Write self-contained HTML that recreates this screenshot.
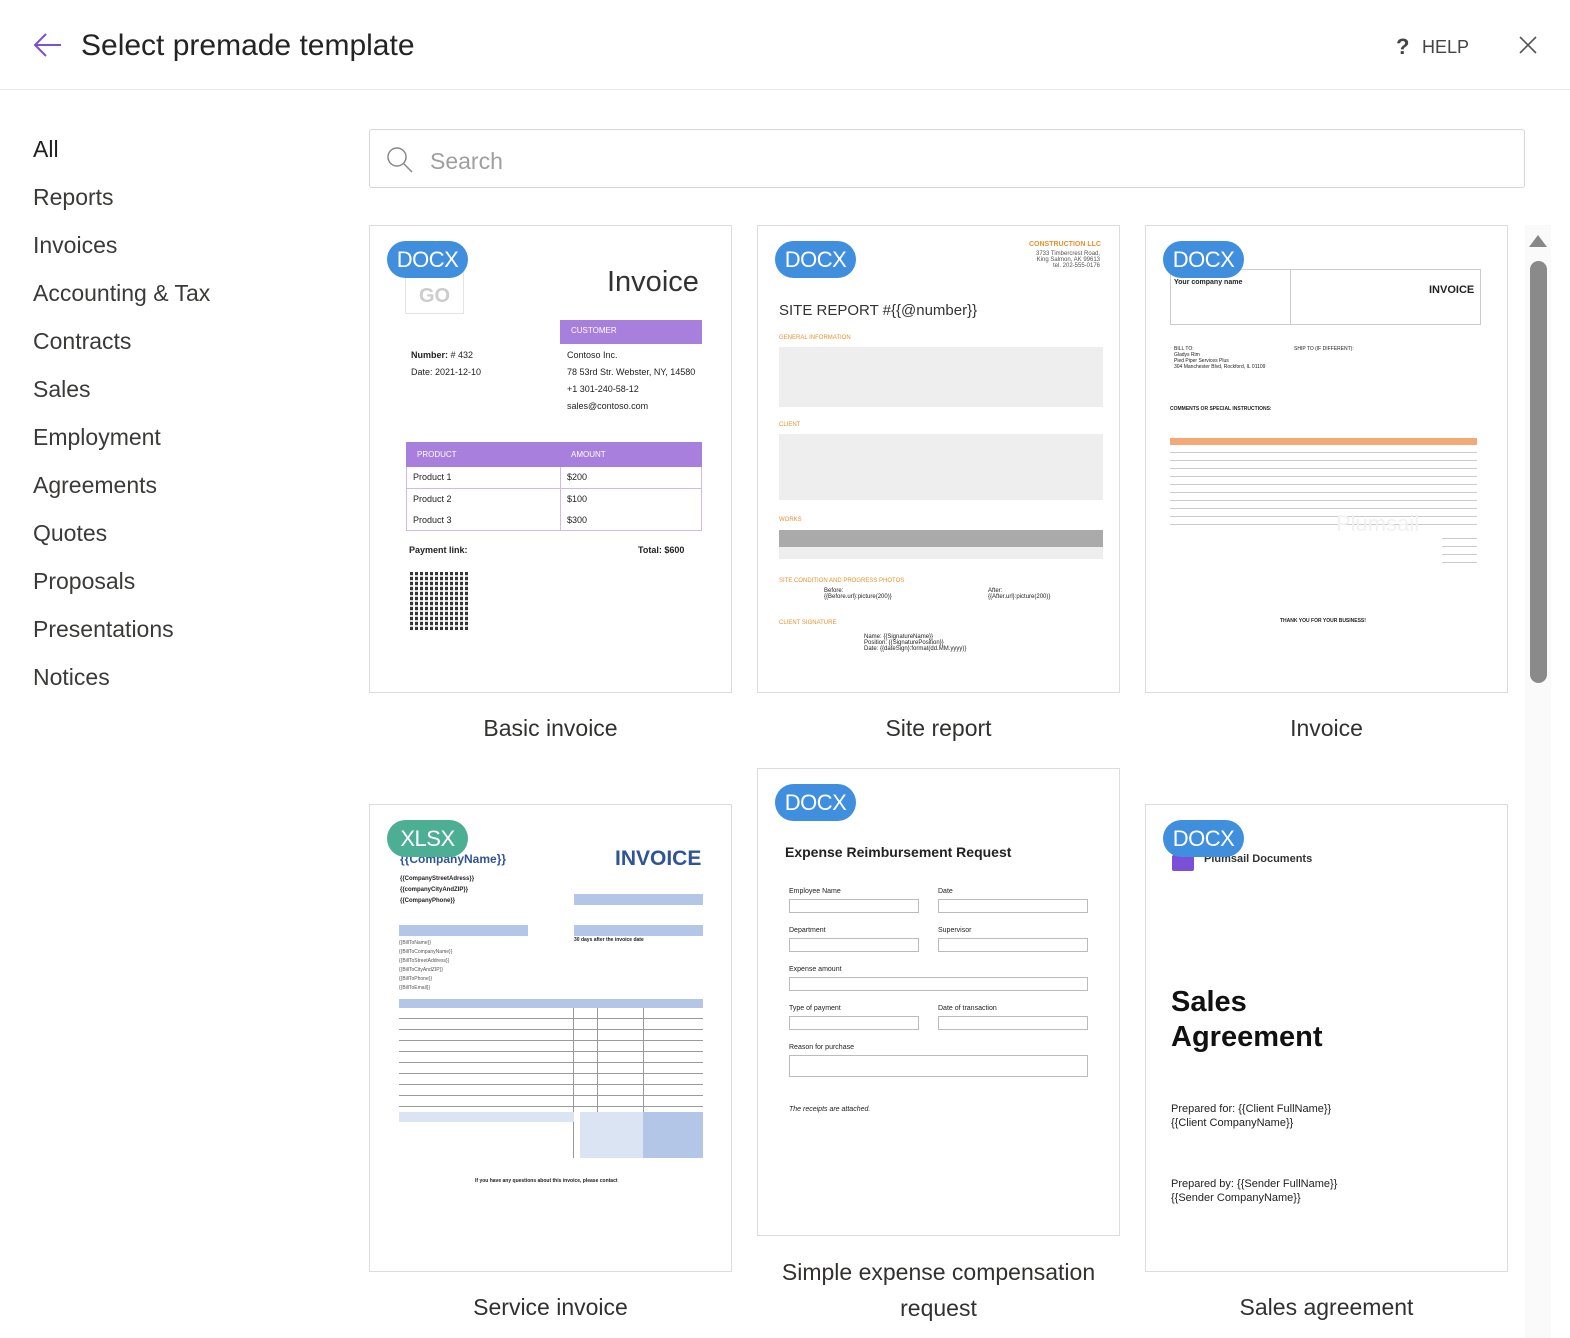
<!DOCTYPE html>
<html><head><meta charset="utf-8"><style>
*{box-sizing:border-box;margin:0;padding:0}
body{width:1570px;height:1338px;overflow:hidden;background:#fff;font-family:"Liberation Sans",sans-serif;color:#323130;position:relative}
.abs{position:absolute}
.hdr{position:absolute;left:0;top:0;width:1570px;height:90px;border-bottom:1px solid #e6e6e6}
.title{position:absolute;left:81px;top:29px;font-size:30px;color:#252423}
.nav div{position:absolute;left:33px;font-size:23px;color:#3b3a39}
.search{position:absolute;left:369px;top:129px;width:1156px;height:59px;border:1px solid #d6d6d6;border-radius:3px}
.card{position:absolute;width:363px;height:468px;border:1px solid #dcdcdc;background:#fff;overflow:hidden}
.badge{position:absolute;left:17px;top:15px;width:81px;height:37px;border-radius:19px;background:#3f8fde;color:#fff;font-size:22px;text-align:center;line-height:38px;z-index:2;letter-spacing:-0.5px}
.lbl{position:absolute;font-size:23px;color:#323130;text-align:center;width:363px}
.t{position:absolute;font-size:9px;color:#222;white-space:nowrap}
.bar{position:absolute;background:#a87fdc}
.g{position:absolute;background:#ddd}
.bl{position:absolute;background:#b4c6e7}
</style></head><body>
<div class="hdr"></div>
<svg class="abs" style="left:32px;top:32px" width="30" height="26" viewBox="0 0 30 26"><path d="M14 2 L3 13 L14 24 M3 13 H29" stroke="#7b4fd6" stroke-width="2" fill="none"/></svg>
<div class="title">Select premade template</div>
<div class="abs" style="left:1396px;top:34px;font-size:22px;font-weight:bold;color:#444">?</div>
<div class="abs" style="left:1422px;top:37px;font-size:18px;color:#444">HELP</div>
<svg class="abs" style="left:1519px;top:36px" width="18" height="18"><path d="M1 1L17 17M17 1L1 17" stroke="#555" stroke-width="1.6"/></svg>
<div class="nav">
<div style="top:136px;color:#201f1e">All</div>
<div style="top:184px">Reports</div>
<div style="top:232px">Invoices</div>
<div style="top:280px">Accounting &amp; Tax</div>
<div style="top:328px">Contracts</div>
<div style="top:376px">Sales</div>
<div style="top:424px">Employment</div>
<div style="top:472px">Agreements</div>
<div style="top:520px">Quotes</div>
<div style="top:568px">Proposals</div>
<div style="top:616px">Presentations</div>
<div style="top:664px">Notices</div>
</div>
<div class="search"><svg class="abs" style="left:16px;top:16px" width="28" height="28"><circle cx="11" cy="11" r="9" stroke="#888" stroke-width="1.5" fill="none"/><path d="M18 18L26 26" stroke="#888" stroke-width="1.5"/></svg><div class="abs" style="left:60px;top:18px;font-size:23px;color:#a19f9d">Search</div></div>

<div class="abs" style="left:1525px;top:225px;width:26px;height:1113px;background:#fafafa"></div>
<svg class="abs" style="left:1529px;top:234px" width="18" height="13"><path d="M0 13L9 1L18 13Z" fill="#888"/></svg>
<div class="abs" style="left:1530px;top:261px;width:17px;height:422px;border-radius:9px;background:#8a8a8a"></div>

<div class="card" style="left:369px;top:225px">
<div class="badge">DOCX</div>
<div class="abs" style="left:35px;top:40px;width:59px;height:48px;border:1px solid #e4e4e4;color:#ccc;font-weight:bold;font-size:20px;text-align:center;padding-top:18px">GO</div>
<div class="t" style="left:237px;top:40px;font-size:29px;color:#333">Invoice</div>
<div class="bar" style="left:190px;top:94px;width:142px;height:24px"></div><div class="t" style="left:201px;top:100px;color:#fff;font-size:8px">CUSTOMER</div>
<div class="t" style="left:41px;top:124px"><b>Number:</b> # 432</div><div class="t" style="left:41px;top:141px">Date: 2021-12-10</div>
<div class="t" style="left:197px;top:124px">Contoso Inc.</div><div class="t" style="left:197px;top:141px">78 53rd Str. Webster, NY, 14580</div><div class="t" style="left:197px;top:158px">+1 301-240-58-12</div><div class="t" style="left:197px;top:175px">sales@contoso.com</div>
<div class="bar" style="left:36px;top:216px;width:296px;height:25px"></div>
<div class="t" style="left:47px;top:224px;color:#fff;font-size:8px">PRODUCT</div><div class="t" style="left:201px;top:224px;color:#fff;font-size:8px">AMOUNT</div>
<div class="abs" style="left:36px;top:241px;width:296px;height:64px;border:1px solid #cdb8ef;border-top:none"></div>
<div class="abs" style="left:190px;top:241px;width:1px;height:64px;background:#cdb8ef"></div>
<div class="abs" style="left:36px;top:262px;width:296px;height:1px;background:#cdb8ef"></div>
<div class="t" style="left:43px;top:246px">Product 1</div><div class="t" style="left:197px;top:246px">$200</div>
<div class="t" style="left:43px;top:268px">Product 2</div><div class="t" style="left:197px;top:268px">$100</div>
<div class="t" style="left:43px;top:289px">Product 3</div><div class="t" style="left:197px;top:289px">$300</div>
<div class="t" style="left:39px;top:319px;font-weight:bold">Payment link:</div><div class="t" style="left:268px;top:319px;font-weight:bold">Total: $600</div>
<div class="abs" style="left:40px;top:346px;width:58px;height:58px;background:repeating-linear-gradient(90deg,#111 0 3px,#fff 3px 5px),#111;opacity:.85"></div>
<div class="abs" style="left:40px;top:346px;width:58px;height:58px;background:repeating-linear-gradient(0deg,transparent 0 3px,rgba(255,255,255,.8) 3px 5px)"></div>
</div>
<div class="lbl" style="left:369px;top:715px">Basic invoice</div>

<div class="card" style="left:757px;top:225px">
<div class="badge">DOCX</div>
<div class="t" style="left:271px;top:15px;color:#e8912d;font-size:7px;font-weight:bold">CONSTRUCTION LLC</div>
<div class="t" style="left:278px;top:25px;font-size:6px;color:#555;text-align:right">3733 Timbercrest Road,<br>King Salmon, AK 99613<br>tel. 202-555-0176</div>
<div class="t" style="left:21px;top:76px;font-size:15px;color:#333">SITE REPORT #{{@number}}</div>
<div class="t" style="left:21px;top:109px;font-size:6px;color:#e8912d">GENERAL INFORMATION</div>
<div class="g" style="left:21px;top:121px;width:324px;height:60px;background:#eee"></div>
<div class="t" style="left:21px;top:196px;font-size:6px;color:#e8912d">CLIENT</div>
<div class="g" style="left:21px;top:208px;width:324px;height:66px;background:#eee"></div>
<div class="t" style="left:21px;top:291px;font-size:6px;color:#e8912d">WORKS</div>
<div class="g" style="left:21px;top:304px;width:324px;height:17px;background:#aaa"></div>
<div class="g" style="left:21px;top:321px;width:324px;height:12px;background:#eee"></div>
<div class="t" style="left:21px;top:352px;font-size:6px;color:#e8912d">SITE CONDITION AND PROGRESS PHOTOS</div>
<div class="t" style="left:66px;top:362px;font-size:6px">Before:<br>{{Before.url}:picture(200)}</div>
<div class="t" style="left:230px;top:362px;font-size:6px">After:<br>{{After.url}:picture(200)}</div>
<div class="t" style="left:21px;top:394px;font-size:6px;color:#e8912d">CLIENT SIGNATURE</div>
<div class="t" style="left:106px;top:408px;font-size:6px">Name: {{SignatureName}}<br>Position: {{SignaturePosition}}<br>Date: {{dateSign}:format(dd.MM.yyyy)}</div>
</div>
<div class="lbl" style="left:757px;top:715px">Site report</div>

<div class="card" style="left:1145px;top:225px">
<div class="badge">DOCX</div>
<div class="abs" style="left:24px;top:43px;width:311px;height:56px;border:1px solid #ccc"></div>
<div class="abs" style="left:144px;top:43px;width:1px;height:56px;background:#ccc"></div>
<div class="t" style="left:28px;top:53px;font-size:7px;font-weight:bold">Your company name</div>
<div class="t" style="left:283px;top:58px;font-size:11px;font-weight:bold">INVOICE</div>
<div class="t" style="left:28px;top:120px;font-size:5px">BILL TO:<br>Gladys Rim<br>Pied Piper Services Plus<br>304 Manchester Blvd, Rockford, IL 01109</div>
<div class="t" style="left:148px;top:120px;font-size:5px">SHIP TO (IF DIFFERENT):</div>
<div class="t" style="left:24px;top:180px;font-size:5px;font-weight:bold">COMMENTS OR SPECIAL INSTRUCTIONS:</div>
<div class="abs" style="left:24px;top:212px;width:307px;height:7px;background:#f4a875"></div>
<div class="abs" style="left:24px;top:219px;width:307px;height:80px;background:repeating-linear-gradient(180deg,#fff 0 7px,#ccc 7px 8px)"></div>
<div class="t" style="left:190px;top:285px;font-size:22px;color:#f1f1f1">Plumsail</div>
<div class="abs" style="left:296px;top:305px;width:35px;height:35px;background:repeating-linear-gradient(180deg,#fff 0 7px,#ccc 7px 8px)"></div>
<div class="t" style="left:134px;top:392px;font-size:5px;font-weight:bold">THANK YOU FOR YOUR BUSINESS!</div>
</div>
<div class="lbl" style="left:1145px;top:715px">Invoice</div>

<div class="card" style="left:369px;top:804px">
<div class="badge" style="background:#4cae92">XLSX</div>
<div class="t" style="left:30px;top:47px;font-size:12px;color:#2f5597;font-weight:bold">{{CompanyName}}</div>
<div class="t" style="left:245px;top:42px;font-size:21px;color:#2f5597;font-weight:bold">INVOICE</div>
<div class="t" style="left:30px;top:69px;font-size:6px;line-height:11px;font-weight:bold">{{CompanyStreetAdress}}<br>{{companyCityAndZIP}}<br>{{CompanyPhone}}</div>
<div class="bl" style="left:204px;top:89px;width:129px;height:11px"></div>
<div class="bl" style="left:29px;top:120px;width:129px;height:11px"></div>
<div class="bl" style="left:204px;top:120px;width:129px;height:11px"></div>
<div class="t" style="left:204px;top:132px;font-size:5px;font-weight:bold">30 days after the invoice date</div>
<div class="t" style="left:29px;top:134px;font-size:5px;line-height:9px;color:#555">{{BillToName}}<br>{{BillToCompanyName}}<br>{{BillToStreetAddress}}<br>{{BillToCityAndZIP}}<br>{{BillToPhone}}<br>{{BillToEmail}}</div>
<div class="bl" style="left:29px;top:194px;width:304px;height:9px"></div>
<div class="abs" style="left:29px;top:203px;width:304px;height:104px;background:repeating-linear-gradient(180deg,#fff 0 10px,#999 10px 11px)"></div>
<div class="abs" style="left:203px;top:203px;width:1px;height:150px;background:#999"></div>
<div class="abs" style="left:227px;top:203px;width:1px;height:150px;background:#999"></div>
<div class="abs" style="left:273px;top:203px;width:1px;height:104px;background:#999"></div>
<div class="bl" style="left:29px;top:307px;width:175px;height:10px;background:#dbe4f3"></div>
<div class="bl" style="left:210px;top:307px;width:123px;height:46px;background:#dbe4f3"></div>
<div class="bl" style="left:273px;top:307px;width:60px;height:46px;background:#b4c6e7"></div>
<div class="t" style="left:105px;top:373px;font-size:5px;font-weight:bold">If you have any questions about this invoice, please contact</div>
</div>
<div class="lbl" style="left:369px;top:1294px">Service invoice</div>

<div class="card" style="left:757px;top:768px">
<div class="badge">DOCX</div>
<div class="t" style="left:27px;top:75px;font-size:14px;font-weight:bold;color:#222">Expense Reimbursement Request</div>
<div class="t" style="left:31px;top:119px;font-size:7px">Employee Name</div><div class="t" style="left:180px;top:119px;font-size:7px">Date</div>
<div class="abs" style="left:31px;top:130px;width:130px;height:14px;border:1px solid #bbb"></div><div class="abs" style="left:180px;top:130px;width:150px;height:14px;border:1px solid #bbb"></div>
<div class="t" style="left:31px;top:158px;font-size:7px">Department</div><div class="t" style="left:180px;top:158px;font-size:7px">Supervisor</div>
<div class="abs" style="left:31px;top:169px;width:130px;height:14px;border:1px solid #bbb"></div><div class="abs" style="left:180px;top:169px;width:150px;height:14px;border:1px solid #bbb"></div>
<div class="t" style="left:31px;top:197px;font-size:7px">Expense amount</div>
<div class="abs" style="left:31px;top:208px;width:299px;height:14px;border:1px solid #bbb"></div>
<div class="t" style="left:31px;top:236px;font-size:7px">Type of payment</div><div class="t" style="left:180px;top:236px;font-size:7px">Date of transaction</div>
<div class="abs" style="left:31px;top:247px;width:130px;height:14px;border:1px solid #bbb"></div><div class="abs" style="left:180px;top:247px;width:150px;height:14px;border:1px solid #bbb"></div>
<div class="t" style="left:31px;top:275px;font-size:7px">Reason for purchase</div>
<div class="abs" style="left:31px;top:286px;width:299px;height:22px;border:1px solid #bbb"></div>
<div class="t" style="left:31px;top:337px;font-size:7px;font-style:italic">The receipts are attached.</div>
</div>
<div class="lbl" style="left:747px;width:383px;top:1254px;line-height:36px">Simple expense compensation<br>request</div>

<div class="card" style="left:1145px;top:804px">
<div class="badge">DOCX</div>
<div class="abs" style="left:26px;top:50px;width:22px;height:16px;background:#7b4fd6;border-radius:2px"></div>
<div class="t" style="left:58px;top:48px;font-size:11px;font-weight:bold;color:#333">Plumsail Documents</div>
<div class="t" style="left:25px;top:180px;font-size:29px;font-weight:bold;line-height:35px;color:#111">Sales<br>Agreement</div>
<div class="t" style="left:25px;top:297px;font-size:11px;line-height:14px">Prepared for: {{Client FullName}}<br>{{Client CompanyName}}</div>
<div class="t" style="left:25px;top:372px;font-size:11px;line-height:14px">Prepared by: {{Sender FullName}}<br>{{Sender CompanyName}}</div>
</div>
<div class="lbl" style="left:1145px;top:1294px">Sales agreement</div>
</body></html>
